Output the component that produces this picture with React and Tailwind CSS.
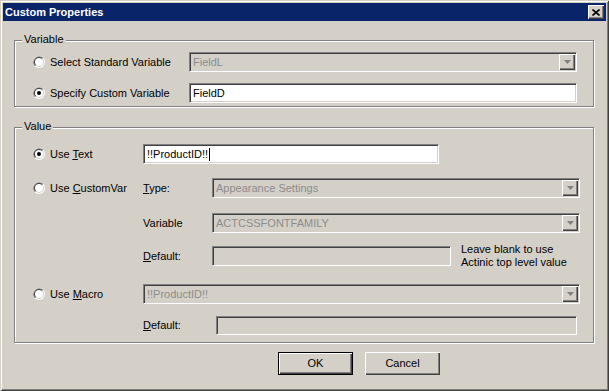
// Custom Properties dialog (classic Windows look)
const SUNKEN =
  "border border-t-[#808080] border-l-[#808080] border-b-white border-r-white shadow-[inset_1px_1px_0_#404040,inset_-1px_-1px_0_#d4d0c8]";

const RAISED =
  "bg-[#d4d0c8] shadow-[inset_1px_1px_0_#fff,inset_-1px_-1px_0_#404040,inset_-2px_-2px_0_#808080]";

function Radio({ checked }) {
  return (
    <svg width="12" height="12" viewBox="0 0 12 12" className="shrink-0">
      <circle cx="6" cy="6" r="6" fill="#fff" />
      <path d="M1.76 10.24A6 6 0 0 1 10.24 1.76Z" fill="#808080" />
      <circle cx="6" cy="6" r="5" fill="#d4d0c8" />
      <path d="M2.46 9.54A5 5 0 0 1 9.54 2.46Z" fill="#404040" />
      <circle cx="6" cy="6" r="4" fill="#fff" />
      {checked && <circle cx="6" cy="6" r="2" fill="#000" />}
    </svg>
  );
}

function RadioLabel({ checked, children, w }) {
  return (
    <div className={`flex shrink-0 items-center gap-[5px] ${w}`}>
      <Radio checked={checked} />
      <span>{children}</span>
    </div>
  );
}

function Combo({ value, w }) {
  return (
    <div className={`${SUNKEN} flex h-[20px] items-center bg-[#d4d0c8] ${w}`}>
      <span className="flex-1 truncate pl-[3px] text-[#8c8c8c]">{value}</span>
      <span className={`${RAISED} mr-[1px] flex h-[16px] w-[16px] items-center justify-center`}>
        <svg width="7" height="4" viewBox="0 0 7 4">
          <path d="M0 0h7L3.5 4z" fill="#808080" />
        </svg>
      </span>
    </div>
  );
}

function TextBox({ value, w, h = "h-[20px]", caret, disabled }) {
  return (
    <div
      className={`${SUNKEN} flex items-center pl-[3px] ${h} ${w} ${
        disabled ? "bg-[#d4d0c8]" : "bg-white"
      }`}
    >
      <span>{value}</span>
      {caret && <span className="ml-[1px] h-[13px] w-[1px] bg-black" />}
    </div>
  );
}

function Group({ legend, className, children }) {
  return (
    <div
      className={`relative border border-[#808080] shadow-[inset_1px_1px_0_#fff,1px_1px_0_#fff] ${className}`}
    >
      <span className="absolute -top-[8px] left-[7px] bg-[#d4d0c8] px-[2px] leading-[13px]">
        {legend}
      </span>
      {children}
    </div>
  );
}

export default function App() {
  return (
    <div className="flex h-[391px] w-[609px] flex-col bg-[#d4d0c8] p-[3px] text-[11px] leading-[13px] text-black shadow-[inset_1px_1px_0_#d4d0c8,inset_-1px_-1px_0_#404040,inset_2px_2px_0_#fff,inset_-2px_-2px_0_#808080] [font-family:'Liberation_Sans',Arial,sans-serif]">
      <div className="flex h-[18px] items-center justify-between bg-[#0a246a] pl-[2px] pr-[2px]">
        <span className="font-bold text-white">Custom Properties</span>
        <span className={`${RAISED} flex h-[14px] w-[16px] items-center justify-center`}>
          <svg width="8" height="7" viewBox="0 0 8 7">
            <path d="M0.5 0.5L7.5 6.5M7.5 0.5L0.5 6.5" stroke="#000" strokeWidth="1.6" />
          </svg>
        </span>
      </div>

      <div className="flex flex-col pl-[11px]">
        <Group legend="Variable" className="mt-[19px] w-[580px]">
          <div className="flex flex-col gap-[11px] pb-[3px] pl-[18px] pt-[11px]">
            <div className="flex h-[20px] items-center">
              <RadioLabel w="w-[156px]">Select Standard Variable</RadioLabel>
              <Combo value="FieldL" w="w-[388px]" />
            </div>
            <div className="flex h-[20px] items-center">
              <RadioLabel checked w="w-[156px]">
                Specify Custom Variable
              </RadioLabel>
              <TextBox value="FieldD" w="w-[388px]" />
            </div>
          </div>
        </Group>

        <Group legend="Value" className="mt-[20px] w-[580px]">
          <div className="flex flex-col pb-[7px] pl-[18px] pt-[16px]">
            <div className="flex h-[20px] items-center">
              <RadioLabel checked w="w-[110px]">
                Use <u>T</u>ext
              </RadioLabel>
              <TextBox value="!!ProductID!!" w="w-[296px]" caret />
            </div>
            <div className="mt-[14px] flex h-[20px] items-center">
              <RadioLabel w="w-[110px]">
                Use <u>C</u>ustomVar
              </RadioLabel>
              <span className="w-[69px] shrink-0">
                <u>T</u>ype:
              </span>
              <Combo value="Appearance Settings" w="w-[368px]" />
            </div>
            <div className="mt-[15px] flex h-[20px] items-center">
              <span className="w-[110px] shrink-0" />
              <span className="w-[69px] shrink-0">Variable</span>
              <Combo value="ACTCSSFONTFAMILY" w="w-[368px]" />
            </div>
            <div className="mt-[13px] flex h-[20px] items-center">
              <span className="w-[110px] shrink-0" />
              <span className="w-[69px] shrink-0">
                <u>D</u>efault:
              </span>
              <TextBox value="" w="w-[239px]" disabled />
              <div className="ml-[10px] flex flex-col">
                <span>Leave blank to use</span>
                <span>Actinic top level value</span>
              </div>
            </div>
            <div className="mt-[18px] flex h-[20px] items-center">
              <RadioLabel w="w-[110px]">
                Use <u>M</u>acro
              </RadioLabel>
              <Combo value="!!ProductID!!" w="w-[437px]" />
            </div>
            <div className="mt-[12px] flex h-[19px] items-center">
              <span className="w-[110px] shrink-0" />
              <span className="w-[73px] shrink-0">
                <u>D</u>efault:
              </span>
              <TextBox value="" w="w-[361px]" h="h-[19px]" disabled />
            </div>
          </div>
        </Group>

        <div className="ml-[264px] mt-[9px] flex gap-[12px]">
          <button className="h-[23px] w-[75px] border border-black bg-[#d4d0c8] shadow-[inset_1px_1px_0_#fff,inset_-1px_-1px_0_#404040,inset_-2px_-2px_0_#808080]">
            OK
          </button>
          <button className={`${RAISED} h-[23px] w-[75px]`}>Cancel</button>
        </div>
      </div>
    </div>
  );
}
